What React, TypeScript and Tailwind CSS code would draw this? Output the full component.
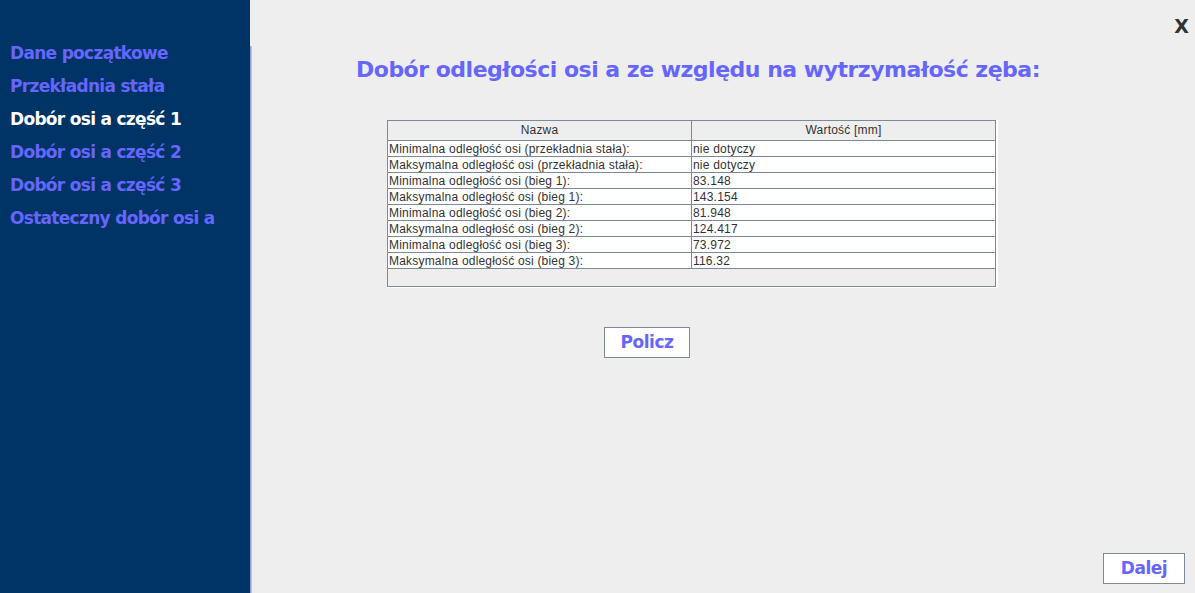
import React from "react";

const rows: [string, string][] = [
  ["Minimalna odległość osi (przekładnia stała):", "nie dotyczy"],
  ["Maksymalna odległość osi (przekładnia stała):", "nie dotyczy"],
  ["Minimalna odległość osi (bieg 1):", "83.148"],
  ["Maksymalna odległość osi (bieg 1):", "143.154"],
  ["Minimalna odległość osi (bieg 2):", "81.948"],
  ["Maksymalna odległość osi (bieg 2):", "124.417"],
  ["Minimalna odległość osi (bieg 3):", "73.972"],
  ["Maksymalna odległość osi (bieg 3):", "116.32"],
];

const nav = [
  { label: "Dane początkowe", active: false },
  { label: "Przekładnia stała", active: false },
  { label: "Dobór osi a część 1", active: true },
  { label: "Dobór osi a część 2", active: false },
  { label: "Dobór osi a część 3", active: false },
  { label: "Ostateczny dobór osi a", active: false },
];

const bold = { fontFamily: '"DejaVu Sans", sans-serif' };

export default function App() {
  return (
    <div className="flex w-[1195px] h-[593px] overflow-hidden bg-[#eeeeee]" style={bold}>
      <aside className="w-[250px] shrink-0 bg-[#003366] pt-[43px] pl-[10px] flex flex-col">
        {nav.map((n) => (
          <div
            key={n.label}
            className={`h-[33px] leading-[20px] text-[17px] font-bold tracking-[-0.7px] ${
              n.active ? "text-white" : "text-[#6666ff]"
            }`}
          >
            {n.label}
          </div>
        ))}
      </aside>
      <main className="relative flex-1 flex flex-col">
        <div className="absolute left-0 top-[46px] bottom-0 w-[2px] bg-gradient-to-r from-[#7b97d6] to-[#c5d2ee]" />
        <div className="absolute right-[6px] top-[12px] text-[19px] font-bold text-[#333333]">X</div>
        <h1 className="mt-[55px] pl-[106px] text-[22px] leading-[30px] font-bold tracking-[-0.5px] text-[#6666ff]">
          Dobór odległości osi a ze względu na wytrzymałość zęba:
        </h1>
        <div className="mt-[35px] ml-[137px] w-[611px] h-[168px] border-r-[2px] border-b-[1px] border-white">
          <div
            className="w-[609px] h-[167px] border border-[#7a8a99] bg-[#eeeeee] text-[12px] tracking-[0.2px] text-[#333333]"
            style={{ fontFamily: '"Liberation Sans", Arial, sans-serif' }}
          >
            <div className="flex h-[20px] border-b border-[#7a8a99] leading-[19px]">
              <div className="w-[304px] border-r border-[#7a8a99] text-center">Nazwa</div>
              <div className="flex-1 text-center">Wartość [mm]</div>
            </div>
            {rows.map(([a, b]) => (
              <div key={a} className="flex h-[16px] border-b border-[#7a8a99] bg-white leading-[16px]">
                <div className="w-[304px] border-r border-[#7a8a99] pl-[1px] whitespace-nowrap">{a}</div>
                <div className="flex-1 pl-[1px]">{b}</div>
              </div>
            ))}
          </div>
        </div>
        <div className="mt-[39px] ml-[354px]">
          <button className="w-[86px] h-[31px] bg-white border border-[#7a8a99] text-[17px] font-bold text-[#6666ff] tracking-[-0.5px]">
            Policz
          </button>
        </div>
        <div className="mt-auto mb-[9px] self-end mr-[10px]">
          <button className="w-[82px] h-[31px] bg-white border border-[#7a8a99] text-[17px] font-bold text-[#6666ff] tracking-[-0.5px]">
            Dalej
          </button>
        </div>
      </main>
    </div>
  );
}
